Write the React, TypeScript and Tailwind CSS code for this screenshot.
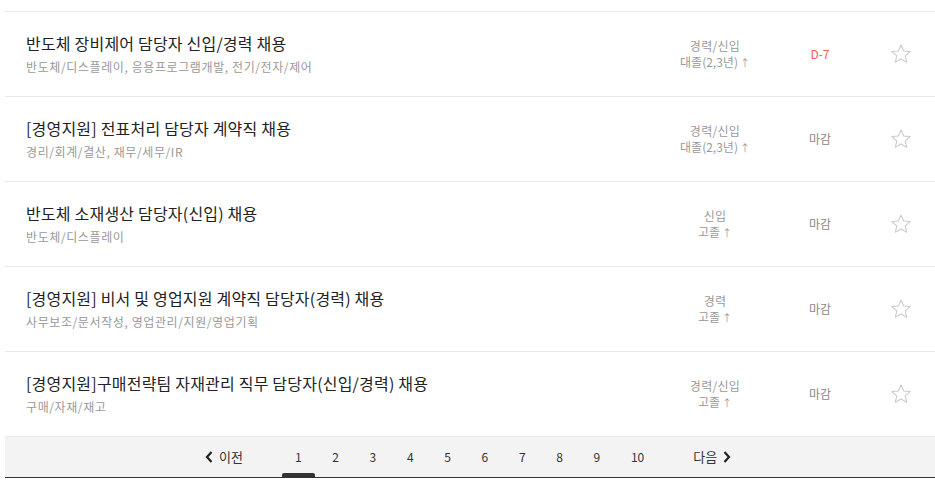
const font = {
  fontFamily: '"Malgun Gothic", "Noto Sans CJK KR", "Noto Sans", sans-serif',
};

type Job = {
  title: string;
  tags: string;
  career: string;
  edu: string;
  deadline: string;
  urgent?: boolean;
};

const jobs: Job[] = [
  {
    title: "반도체 장비제어 담당자 신입/경력 채용",
    tags: "반도체/디스플레이, 응용프로그램개발, 전기/전자/제어",
    career: "경력/신입",
    edu: "대졸(2,3년)",
    deadline: "D-7",
    urgent: true,
  },
  {
    title: "[경영지원] 전표처리 담당자 계약직 채용",
    tags: "경리/회계/결산, 재무/세무/IR",
    career: "경력/신입",
    edu: "대졸(2,3년)",
    deadline: "마감",
  },
  {
    title: "반도체 소재생산 담당자(신입) 채용",
    tags: "반도체/디스플레이",
    career: "신입",
    edu: "고졸",
    deadline: "마감",
  },
  {
    title: "[경영지원] 비서 및 영업지원 계약직 담당자(경력) 채용",
    tags: "사무보조/문서작성, 영업관리/지원/영업기획",
    career: "경력",
    edu: "고졸",
    deadline: "마감",
  },
  {
    title: "[경영지원]구매전략팀 자재관리 직무 담당자(신입/경력) 채용",
    tags: "구매/자재/재고",
    career: "경력/신입",
    edu: "고졸",
    deadline: "마감",
  },
];

function Star() {
  return (
    <svg width="22" height="22" viewBox="0 0 24 24" fill="none">
      <path
        d="M12 2.2l2.9 6.6 7.1.6-5.4 4.7 1.6 7-6.2-3.7-6.2 3.7 1.6-7L2 9.4l7.1-.6L12 2.2z"
        stroke="#c8c8c8"
        strokeWidth="1.1"
        strokeLinejoin="round"
      />
    </svg>
  );
}

function Chevron({ dir }: { dir: "left" | "right" }) {
  return (
    <svg width="8" height="12" viewBox="0 0 8 12" fill="none">
      <path
        d={dir === "left" ? "M6.5 1L2 6l4.5 5" : "M1.5 1L6 6l-4.5 5"}
        stroke="#222"
        strokeWidth="2.2"
      />
    </svg>
  );
}

export default function App() {
  const pages = [1, 2, 3, 4, 5, 6, 7, 8, 9, 10];
  return (
    <div className="w-[935px] h-[488px] bg-white overflow-hidden" style={font}>
      <div className="ml-[5px] pt-[11px]">
        {jobs.map((job, i) => (
          <div
            key={i}
            className="flex items-center h-[85px] border-t border-[#e9e9e9]"
          >
            <div className="flex-1 pl-[21px]">
              <div className="text-[16px] leading-[20px] text-[#222] tracking-[0.2px]">
                {job.title}
              </div>
              <div className="text-[12px] leading-[16px] text-[#999] mt-[6px] tracking-[0.6px]">
                {job.tags}
              </div>
            </div>
            <div className="w-[120px] text-center text-[12px] leading-[16px] text-[#999] pt-[1px] pl-[4px]">
              <div className="tracking-[0.3px]">{job.career}</div>
              <div>
                {job.edu}
                <span className="text-[10px] ml-[2px]">↑</span>
              </div>
            </div>
            <div
              className={
                job.urgent
                  ? "w-[94px] text-center text-[12px] text-[#ff5b5b]"
                  : "w-[94px] text-center text-[12px] text-[#888]"
              }
            >
              {job.deadline}
            </div>
            <div className="w-[68px] flex justify-center">
              <Star />
            </div>
          </div>
        ))}
        <div className="h-[42px] bg-[#f3f3f3] border-t border-[#e9e9e9] border-b border-b-[#333] flex items-center pl-[200px] text-[#333]">
          <div className="flex items-center gap-[6px] text-[13px]">
            <Chevron dir="left" />
            <span>이전</span>
          </div>
          <div className="flex ml-[34px]">
            {pages.map((p) => (
              <div
                key={p}
                className="relative w-[37.33px] h-[40px] flex items-center pl-[18px] text-[12px]"
              >
                {p}
                {p === 1 && (
                  <div className="absolute left-[5px] bottom-0 w-[33px] h-[4px] rounded-t-[2px] bg-[#333]" />
                )}
              </div>
            ))}
          </div>
          <div className="flex items-center gap-[6px] text-[13px] ml-[43px]">
            <span>다음</span>
            <Chevron dir="right" />
          </div>
        </div>
      </div>
    </div>
  );
}
